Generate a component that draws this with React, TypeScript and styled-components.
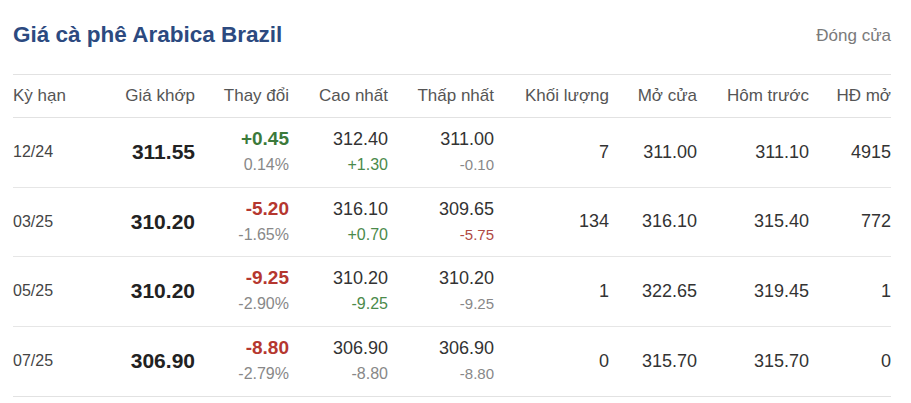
import React, { ReactElement } from 'react';
import styled, { createGlobalStyle } from 'styled-components';

const GlobalStyle = createGlobalStyle`
  body {
    margin: 0;
    background: #fff;
    font-family: 'Liberation Sans', Arial, sans-serif;
  }
`;

const Page = styled.div`
  width: 911px;
  box-sizing: border-box;
  padding: 0 20px 0 13px;
`;

const Header = styled.div`
  height: 74px;
  padding-bottom: 4px;
  box-sizing: border-box;
  display: flex;
  align-items: center;
  justify-content: space-between;
`;

const Title = styled.h1`
  margin: 0;
  font-size: 22.5px;
  font-weight: bold;
  color: #2c4a80;
`;

const Status = styled.span`
  font-size: 17px;
  color: #7a7a7a;
  padding-top: 2px;
`;

const Table = styled.div`
  border-top: 1px solid #e2e2e2;
  border-bottom: 1px solid #e2e2e2;
`;

const COLS = '100px 82px 94px 99px 106px 115px 88px 112px 82px';

const HeadRow = styled.div`
  display: grid;
  grid-template-columns: ${COLS};
  height: 42px;
  align-items: center;
  border-bottom: 1px solid #e2e2e2;
  font-size: 17px;
  color: #555;
`;

const Row = styled.div<{ $last?: boolean }>`
  display: grid;
  grid-template-columns: ${COLS};
  height: ${(p) => (p.$last ? 69 : 68.5)}px;
  align-items: center;
  border-bottom: ${(p) => (p.$last ? 'none' : '1px solid #e6e6e6')};
`;

const Cell = styled.div<{ $left?: boolean }>`
  text-align: ${(p) => (p.$left ? 'left' : 'right')};
  white-space: nowrap;
`;

const Term = styled(Cell)`
  font-size: 16px;
  color: #444;
`;

const Price = styled(Cell)`
  font-size: 21px;
  font-weight: bold;
  color: #222;
`;

const Plain = styled(Cell)`
  font-size: 18px;
  color: #333;
`;

const Stack = styled(Cell)`
  display: flex;
  flex-direction: column;
  align-items: flex-end;
`;

type Tone = 'up' | 'down' | 'flat';

const toneColor = (t: Tone, strong?: boolean) =>
  t === 'up' ? (strong ? '#3b7a3b' : '#4b8a4b') : t === 'down' ? (strong ? '#b5372f' : '#b04a44') : '#6a6a6a';

const Change = styled.span<{ $tone: Tone }>`
  font-size: 19px;
  font-weight: bold;
  line-height: 26px;
  color: ${(p) => toneColor(p.$tone, true)};
`;

const Main = styled.span`
  font-size: 18px;
  line-height: 26px;
  color: #333;
`;

const Sub = styled.span<{ $tone: Tone; $size?: number }>`
  font-size: ${(p) => p.$size ?? 16}px;
  line-height: 26px;
  color: ${(p) => (p.$tone === 'flat' ? '#888' : toneColor(p.$tone))};
`;

interface Item {
  term: string;
  price: string;
  change: string;
  pct: string;
  high: string;
  highChg: string;
  low: string;
  lowChg: string;
  volume: string;
  open: string;
  prev: string;
  oi: string;
  hTone: Tone;
  lTone: Tone;
}

const tone = (v: string): Tone => (v.startsWith('+') ? 'up' : 'down');

const rows: Item[] = [
  { term: '12/24', price: '311.55', change: '+0.45', pct: '0.14%', high: '312.40', highChg: '+1.30', low: '311.00', lowChg: '-0.10', volume: '7', open: '311.00', prev: '311.10', oi: '4915', hTone: 'up', lTone: 'flat' },
  { term: '03/25', price: '310.20', change: '-5.20', pct: '-1.65%', high: '316.10', highChg: '+0.70', low: '309.65', lowChg: '-5.75', volume: '134', open: '316.10', prev: '315.40', oi: '772', hTone: 'up', lTone: 'down' },
  { term: '05/25', price: '310.20', change: '-9.25', pct: '-2.90%', high: '310.20', highChg: '-9.25', low: '310.20', lowChg: '-9.25', volume: '1', open: '322.65', prev: '319.45', oi: '1', hTone: 'up', lTone: 'flat' },
  { term: '07/25', price: '306.90', change: '-8.80', pct: '-2.79%', high: '306.90', highChg: '-8.80', low: '306.90', lowChg: '-8.80', volume: '0', open: '315.70', prev: '315.70', oi: '0', hTone: 'flat', lTone: 'flat' },
];

const heads = ['Kỳ hạn', 'Giá khớp', 'Thay đổi', 'Cao nhất', 'Thấp nhất', 'Khối lượng', 'Mở cửa', 'Hôm trước', 'HĐ mở'];

export default function App(): ReactElement {
  return (
    <Page>
      <GlobalStyle />
      <Header>
        <Title>Giá cà phê Arabica Brazil</Title>
        <Status>Đóng cửa</Status>
      </Header>
      <Table>
        <HeadRow>
          {heads.map((h, i) => (
            <Cell key={h} $left={i === 0}>{h}</Cell>
          ))}
        </HeadRow>
        {rows.map((r, index) => (
          <Row key={r.term} $last={index === rows.length - 1}>
            <Term $left>{r.term}</Term>
            <Price>{r.price}</Price>
            <Stack>
              <Change $tone={tone(r.change)}>{r.change}</Change>
              <Sub $tone="flat">{r.pct}</Sub>
            </Stack>
            <Stack>
              <Main>{r.high}</Main>
              <Sub $tone={r.hTone}>{r.highChg}</Sub>
            </Stack>
            <Stack>
              <Main>{r.low}</Main>
              <Sub $tone={r.lTone} $size={15}>{r.lowChg}</Sub>
            </Stack>
            <Plain>{r.volume}</Plain>
            <Plain>{r.open}</Plain>
            <Plain>{r.prev}</Plain>
            <Plain>{r.oi}</Plain>
          </Row>
        ))}
      </Table>
    </Page>
  );
}
